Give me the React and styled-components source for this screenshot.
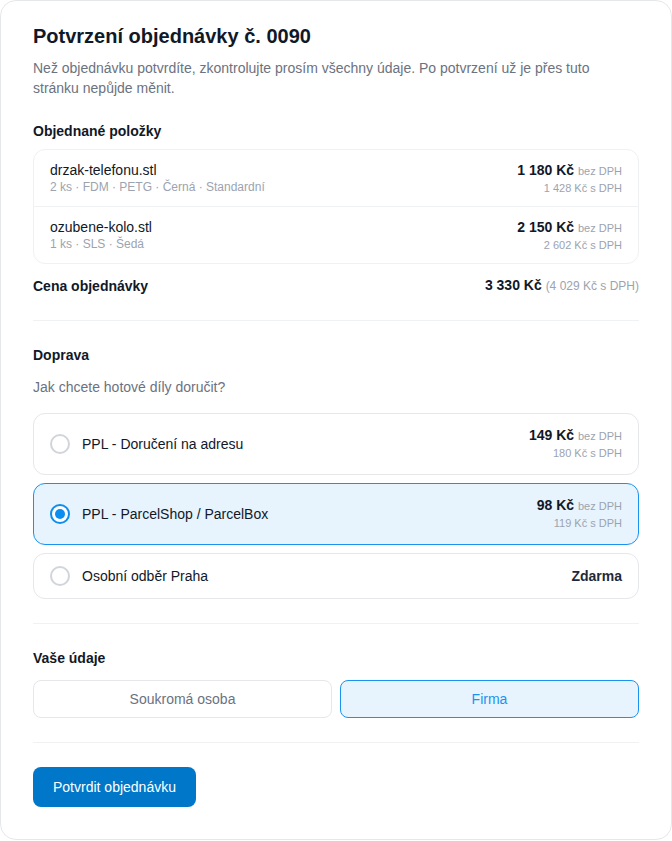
import React, { useState } from 'react';
import styled, { createGlobalStyle } from 'styled-components';

const GlobalStyle = createGlobalStyle`
  * { box-sizing: border-box; }
  body {
    margin: 0;
    background: #ffffff;
    font-family: "Liberation Sans", Arial, sans-serif;
    color: #111827;
  }
`;

const Card = styled.div`
  width: 672px;
  min-height: 840px;
  border: 1px solid #e5e7eb;
  border-radius: 16px;
  background: #fff;
  padding: 23px 32px 32px;
`;

const Title = styled.h1`
  margin: 0;
  font-size: 20px;
  line-height: 24px;
  font-weight: 700;
  color: #111827;
`;

const Lead = styled.p`
  margin: 10px 0 0;
  font-size: 14px;
  line-height: 20px;
  color: #6b7280;
`;

const SectionTitle = styled.h2`
  margin: ${({ top }) => top}px 0 0;
  font-size: 14px;
  line-height: 20px;
  font-weight: 700;
  color: #111827;
`;

const ItemList = styled.div`
  margin-top: 8px;
  border: 1px solid #f0f1f3;
  border-radius: 12px;
`;

const ItemRow = styled.div`
  display: flex;
  justify-content: space-between;
  align-items: flex-start;
  padding: 12px 16px 10px;
  & + & {
    border-top: 1px solid #f0f1f3;
  }
`;

const ItemName = styled.div`
  font-size: 14px;
  line-height: 17px;
  color: #111827;
`;

const Meta = styled.div`
  font-size: 12px;
  line-height: 16px;
  color: #9ca3af;
`;

const PriceBox = styled.div`
  text-align: right;
`;

const PriceMain = styled.div`
  font-size: 14px;
  line-height: 17px;
  font-weight: 700;
  color: #111827;
`;

const PriceNote = styled.span`
  font-size: 11px;
  font-weight: 400;
  color: #9ca3af;
`;

const PriceSub = styled.div`
  font-size: 11px;
  line-height: 16px;
  color: #9ca3af;
`;

const TotalRow = styled.div`
  display: flex;
  justify-content: space-between;
  align-items: center;
  margin-top: 11px;
  font-size: 14px;
  line-height: 20px;
  font-weight: 700;
`;

const TotalNote = styled.span`
  font-size: 12px;
  font-weight: 400;
  color: #9ca3af;
`;

const Divider = styled.hr`
  margin: ${({ top }) => top}px 0 0;
  border: none;
  border-top: 1px solid #f0f1f3;
`;

const Question = styled.p`
  margin: 12px 0 0;
  font-size: 14px;
  line-height: 20px;
  color: #6b7280;
`;

const Options = styled.div`
  display: flex;
  flex-direction: column;
  gap: 8px;
  margin-top: 16px;
`;

const Option = styled.label`
  display: flex;
  align-items: center;
  gap: 12px;
  min-height: ${({ tall }) => (tall ? 62 : 46)}px;
  padding: 0 16px;
  border: 1px solid ${({ active }) => (active ? '#1a93f0' : '#e5e7eb')};
  background: ${({ active }) => (active ? '#e7f4fe' : '#fff')};
  border-radius: 12px;
  cursor: pointer;
`;

const Radio = styled.span`
  flex: none;
  width: 20px;
  height: 20px;
  border-radius: 50%;
  border: 2px solid ${({ checked }) => (checked ? '#0b8ef0' : '#d1d5db')};
  background: #fff;
  display: flex;
  align-items: center;
  justify-content: center;
  &::after {
    content: '';
    width: 10px;
    height: 10px;
    border-radius: 50%;
    background: ${({ checked }) => (checked ? '#0b8ef0' : 'transparent')};
  }
`;

const OptionLabel = styled.span`
  flex: 1;
  font-size: 14px;
  color: #111827;
`;

const Free = styled.span`
  font-size: 14px;
  font-weight: 700;
  color: #1f2937;
`;

const Toggle = styled.div`
  display: grid;
  grid-template-columns: 1fr 1fr;
  gap: 8px;
  margin-top: 12px;
`;

const ToggleButton = styled.button`
  height: 38px;
  border-radius: 8px;
  font-family: inherit;
  font-size: 14px;
  cursor: pointer;
  border: 1px solid ${({ active }) => (active ? '#1a93f0' : '#e5e7eb')};
  background: ${({ active }) => (active ? '#e7f4fe' : '#fff')};
  color: ${({ active }) => (active ? '#1a93f0' : '#6b7280')};
`;

const Submit = styled.button`
  margin-top: 24px;
  height: 40px;
  padding: 0 20px;
  border: none;
  border-radius: 8px;
  background: #0077c8;
  color: #fff;
  font-family: inherit;
  font-size: 14px;
  cursor: pointer;
`;

const items = [
  {
    name: 'drzak-telefonu.stl',
    meta: '2 ks · FDM · PETG · Černá · Standardní',
    price: '1 180 Kč',
    vat: '1 428 Kč s DPH',
  },
  {
    name: 'ozubene-kolo.stl',
    meta: '1 ks · SLS · Šedá',
    price: '2 150 Kč',
    vat: '2 602 Kč s DPH',
  },
];

const shipping = [
  { id: 'ppl-address', label: 'PPL - Doručení na adresu', price: '149 Kč', vat: '180 Kč s DPH' },
  { id: 'ppl-parcel', label: 'PPL - ParcelShop / ParcelBox', price: '98 Kč', vat: '119 Kč s DPH' },
  { id: 'pickup', label: 'Osobní odběr Praha' },
];

const Price = ({ price, vat }) => (
  <PriceBox>
    <PriceMain>
      {price} <PriceNote>bez DPH</PriceNote>
    </PriceMain>
    <PriceSub>{vat}</PriceSub>
  </PriceBox>
);

export default function App() {
  const [delivery, setDelivery] = useState('ppl-parcel');
  const [customer, setCustomer] = useState('company');

  return (
    <>
      <GlobalStyle />
      <Card>
        <Title>Potvrzení objednávky č. 0090</Title>
        <Lead>
          Než objednávku potvrdíte, zkontrolujte prosím všechny údaje. Po potvrzení už je přes tuto
          stránku nepůjde měnit.
        </Lead>

        <SectionTitle top={23}>Objednané položky</SectionTitle>
        <ItemList>
          {items.map((item) => (
            <ItemRow key={item.name}>
              <div>
                <ItemName>{item.name}</ItemName>
                <Meta>{item.meta}</Meta>
              </div>
              <Price price={item.price} vat={item.vat} />
            </ItemRow>
          ))}
        </ItemList>
        <TotalRow>
          <span>Cena objednávky</span>
          <span>
            3 330 Kč <TotalNote>(4 029 Kč s DPH)</TotalNote>
          </span>
        </TotalRow>

        <Divider top={24} />

        <SectionTitle top={24}>Doprava</SectionTitle>
        <Question>Jak chcete hotové díly doručit?</Question>
        <Options>
          {shipping.map((opt) => (
            <Option
              key={opt.id}
              tall={!!opt.price}
              active={delivery === opt.id}
              onClick={() => setDelivery(opt.id)}
            >
              <Radio checked={delivery === opt.id} />
              <OptionLabel>{opt.label}</OptionLabel>
              {opt.price ? <Price price={opt.price} vat={opt.vat} /> : <Free>Zdarma</Free>}
            </Option>
          ))}
        </Options>

        <Divider top={24} />

        <SectionTitle top={24}>Vaše údaje</SectionTitle>
        <Toggle>
          <ToggleButton active={customer === 'person'} onClick={() => setCustomer('person')}>
            Soukromá osoba
          </ToggleButton>
          <ToggleButton active={customer === 'company'} onClick={() => setCustomer('company')}>
            Firma
          </ToggleButton>
        </Toggle>

        <Divider top={24} />

        <Submit>Potvrdit objednávku</Submit>
      </Card>
    </>
  );
}
